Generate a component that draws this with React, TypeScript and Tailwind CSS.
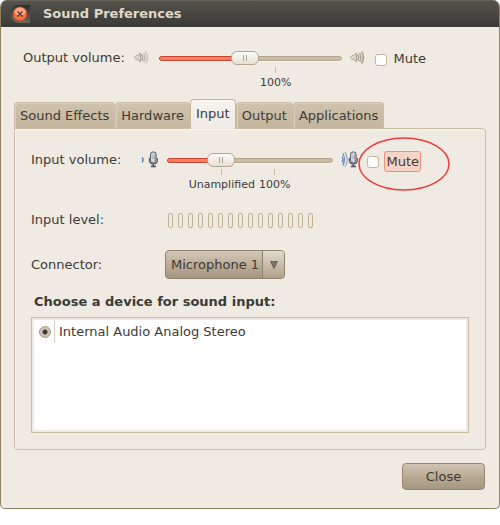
import { useState, type ReactNode } from "react";

function SpeakerIcon({ loud = false }: { loud?: boolean }) {
  const wave = loud ? "#aaa797" : "#cfcabf";
  return (
    <svg width="17" height="16" viewBox="0 0 17 16" fill="none" className="shrink-0" aria-hidden="true">
      <path d="M1 7.5 L2 6.5 H3.5 L6.5 4 V13 L3.5 10.5 H2 L1 9.5 Z" fill="#d9d5c9" stroke="#aaa698" />
      <path d="M7.6 5.5 Q9.6 8.5 7.6 11.5" stroke="#aaa698" strokeWidth="1.5" />
      <path d="M9.6 4 Q12 8.5 9.6 13" stroke={loud ? "#aaa797" : "#bdb9ac"} strokeWidth="1.5" />
      <path d="M11.6 2.6 Q15.2 8.5 11.6 14.4" stroke={wave} strokeWidth="1.8" />
    </svg>
  );
}

function MicIcon({ loud = false }: { loud?: boolean }) {
  return (
    <svg width="18" height="18" viewBox="0 0 18 18" fill="none" className="shrink-0" aria-hidden="true">
      {loud ? (
        <g stroke="#5f7fae" strokeWidth="1.1">
          <path d="M1.8 2.6 Q5.2 8.5 1.8 14.4" />
          <path d="M4 1.2 Q8.4 8.5 4 15.8" stroke="#86a0c4" />
          <path d="M1.2 5.5 Q2.9 8.5 1.2 11.5" />
        </g>
      ) : (
        <path d="M1 6.5 Q3.4 8.8 1 11.3" stroke="#4a72ad" strokeWidth="1.2" />
      )}
      <path d="M8.3 7 V9.5 Q8.5 13 12.3 13 Q16.2 13 16.3 9.5 V7" stroke="#4e5258" strokeWidth="1.1" />
      <rect x="9.4" y="0.8" width="5.8" height="11.2" rx="2.9" fill="#c3c8cf" stroke="#5c6068" />
      <path d="M11 3.5 V9.5 M12.4 2.5 V10.5" stroke="#eef1f4" strokeWidth="0.8" />
      <path d="M13.8 3.5 V10 M10.5 5 H14.5 M10.5 7 H14.5" stroke="#8d939c" strokeWidth="0.7" />
      <path d="M12.3 13 V15" stroke="#4e5258" strokeWidth="1.6" />
      <path d="M9.8 15.6 H14.9" stroke="#4e5258" strokeWidth="1.5" />
    </svg>
  );
}

function VolumeSlider({ id, initial, children }: { id: string; initial: number; children: ReactNode }) {
  const [value, setValue] = useState(initial);
  return (
    <div className="min-w-0 flex-1">
      <div className="grid h-[18px] items-center">
        <div className="col-start-1 row-start-1 h-[5px] rounded-full border border-[#b3a78f] bg-[#c9bda3] shadow-[0_1px_0_#f9f7f3]" />
        <div
          className="col-start-1 row-start-1 h-[5px] rounded-full border border-[#c8442e] bg-[#ff7b61]"
          style={{ width: `${value}%` }}
        />
        <input
          id={id}
          type="range"
          value={value}
          onChange={(e) => setValue(Number(e.target.value))}
          className="z-10 col-start-1 row-start-1 h-[18px] w-full appearance-none bg-transparent outline-none [&::-webkit-slider-thumb]:h-[14px] [&::-webkit-slider-thumb]:w-[28px] [&::-webkit-slider-thumb]:appearance-none [&::-webkit-slider-thumb]:rounded-[6px] [&::-webkit-slider-thumb]:border [&::-webkit-slider-thumb]:border-[#b0a591] [&::-webkit-slider-thumb]:bg-[linear-gradient(90deg,transparent_11px,#aea28c_11px,#aea28c_12px,transparent_12px,transparent_14px,#aea28c_14px,#aea28c_15px,transparent_15px),linear-gradient(#fdfcfa,#e6dfd3)] [&::-webkit-slider-thumb]:bg-[length:100%_6px,100%_100%] [&::-webkit-slider-thumb]:bg-[position:0_3px,0_0] [&::-webkit-slider-thumb]:bg-no-repeat"
        />
      </div>
      {children}
    </div>
  );
}

function Mark({ label }: { label: string }) {
  return (
    <div className="flex flex-col items-center gap-[3px]">
      <span className="h-[6px] w-px bg-[#c9bda3]" />
      <span className="text-[11px] leading-[14px]">{label}</span>
    </div>
  );
}

function MuteBox({ id }: { id: string }) {
  return (
    <input
      id={id}
      type="checkbox"
      className="mt-[5px] size-3 shrink-0 appearance-none rounded-[3px] border border-[#c4b89f] bg-white checked:bg-[#f07746]"
    />
  );
}

const tabs = ["Sound Effects", "Hardware", "Input", "Output", "Applications"];
const levelBars = Array.from({ length: 15 }, (_, i) => i);

export default function App() {
  const [active, setActive] = useState("Input");

  return (
    <div className="min-h-screen bg-white font-['DejaVu_Sans',sans-serif] text-[13px] leading-[18px] text-[#3c3b37]">
      <div className="overflow-hidden rounded-t-[7px] rounded-b-[5px] border border-t-0 border-[#8f8064] bg-[#efeae2]">
        <header className="flex h-[27px] items-center border-t border-[#66635a] bg-gradient-to-b from-[#54524b] to-[#3b3a36] pl-[9px]">
          <button
            type="button"
            aria-label="Close window"
            className="flex h-[18px] w-5 items-center justify-center rounded-l-[9px] bg-gradient-to-b from-[#2e2d2a] to-[#6a6963]"
          >
            <svg width="16" height="16" viewBox="0 0 16 16" aria-hidden="true">
              <circle cx="8" cy="8" r="7" fill="#f0703f" stroke="#b9502e" />
              <ellipse cx="8" cy="5.5" rx="5.4" ry="4" fill="#fbb596" opacity="0.8" />
              <path d="M5.5 5.5 L10.5 10.5 M10.5 5.5 L5.5 10.5" stroke="#5a3a2c" strokeWidth="1.4" />
            </svg>
          </button>
          <h1 className="ml-[13px] text-[13px] font-bold text-[#dfd8c8]">Sound Preferences</h1>
        </header>

        <main className="px-[13px] pt-[22px] pb-[18px]">
          <div className="flex items-start gap-2 pr-[60px] pl-[9px]">
            <label htmlFor="output-volume" className="w-[103px] shrink-0 whitespace-nowrap">
              Output volume:
            </label>
            <SpeakerIcon />
            <VolumeSlider id="output-volume" initial={46}>
              <div className="flex pl-[55%]">
                <Mark label="100%" />
              </div>
            </VolumeSlider>
            <SpeakerIcon loud />
            <div className="flex items-start gap-[6px]">
              <MuteBox id="output-mute" />
              <label htmlFor="output-mute" className="mt-px">
                Mute
              </label>
            </div>
          </div>

          <div role="tablist" className="mt-[9px] flex h-[30px] items-end">
            {tabs.map((tab) => (
              <button
                key={tab}
                type="button"
                role="tab"
                aria-selected={tab === active}
                onClick={() => setActive(tab)}
                className={
                  tab === active
                    ? "relative z-10 h-[30px] rounded-t-[4px] border border-b-0 border-[#c3b699] bg-gradient-to-b from-[#f7f4ef] to-[#efeae2] px-[5px] pb-[2px] whitespace-nowrap"
                    : "h-[27px] rounded-t-[4px] border border-b-0 border-[#c9bea8] bg-gradient-to-b from-[#cfc3ad] to-[#c3b69c] px-[5px] whitespace-nowrap shadow-[inset_1px_1px_0_#d9cfbd]"
                }
              >
                {tab}
              </button>
            ))}
          </div>

          <section
            role="tabpanel"
            aria-label={active}
            className="relative -mt-px rounded-b-[4px] rounded-tr-[4px] border border-[#c9bda3] bg-[#efeae2] px-4 pt-[22px] pb-4 shadow-[inset_1px_1px_0_#f8f5f0]"
          >
            <div className="flex items-start gap-2 pr-12">
              <label htmlFor="input-volume" className="w-[102px] shrink-0 whitespace-nowrap">
                Input volume:
              </label>
              <MicIcon />
              <VolumeSlider id="input-volume" initial={29}>
                <div className="flex gap-1 pl-[13%]">
                  <Mark label="Unamplified" />
                  <Mark label="100%" />
                </div>
              </VolumeSlider>
              <div className="relative flex items-start gap-2">
                <MicIcon loud />
                <MuteBox id="input-mute" />
                <label
                  htmlFor="input-mute"
                  className="-ml-[3px] h-[21px] rounded-[3px] border border-[#ee8f78] bg-[#f5d3c7] px-px leading-[19px]"
                >
                  Mute
                </label>
                <svg
                  width="94"
                  height="56"
                  viewBox="0 0 94 56"
                  fill="none"
                  className="pointer-events-none absolute -top-[15px] left-4"
                  aria-hidden="true"
                >
                  <ellipse cx="47" cy="28" rx="45" ry="26" stroke="#f23a3a" strokeWidth="1.5" />
                </svg>
              </div>
            </div>

            <div className="mt-[18px] flex h-5 items-center">
              <span id="level-label" className="w-[137px]">
                Input level:
              </span>
              <div role="meter" aria-labelledby="level-label" aria-valuenow={0} className="flex gap-[5px]">
                {levelBars.map((bar) => (
                  <span key={bar} className="h-[15px] w-[5px] rounded-[2px] border border-[#c0b294]" />
                ))}
              </div>
            </div>

            <div className="mt-5 flex h-[29px] items-center">
              <label htmlFor="connector" className="w-[134px]">
                Connector:
              </label>
              <div className="relative">
                <select
                  id="connector"
                  className="block h-[29px] w-[120px] appearance-none rounded-[4px] border border-[#8f816c] bg-gradient-to-b from-[#d3c8b9] via-[#bbad98] to-[#a59680] pl-[5px]"
                >
                  <option>Microphone 1</option>
                </select>
                <span className="pointer-events-none absolute top-px right-px bottom-px flex w-[22px] items-center justify-center rounded-r-[3px] border-l border-[#8f816c] bg-gradient-to-b from-[#e2dace] to-[#b0a18b]">
                  <svg width="8" height="8" viewBox="0 0 8 8" aria-hidden="true">
                    <path d="M0.5 0.5 H7.5 L4 7.5 Z" fill="#7b756a" stroke="#6b665c" />
                  </svg>
                </span>
              </div>
            </div>

            <h2 id="device-heading" className="mt-[13px] pl-[3px] font-bold leading-5">
              Choose a device for sound input:
            </h2>
            <div
              role="radiogroup"
              aria-labelledby="device-heading"
              className="mt-[5px] min-h-[116px] border border-[#cbbd9f] bg-[#efeae2] p-[2px]"
            >
              <div className="min-h-[110px] bg-white">
                <div className="flex h-[23px] items-center">
                  <div className="flex h-full w-[21px] items-center border-r border-[#d6d3cd] pl-[5px]">
                    <input
                      id="device-internal"
                      type="radio"
                      name="device"
                      defaultChecked
                      className="size-3 appearance-none rounded-full border border-[#a99d8b] bg-[#cfc3b3] checked:bg-[radial-gradient(circle,#3c3b37_0,#3c3b37_2px,#cfc3b3_3px)]"
                    />
                  </div>
                  <label htmlFor="device-internal" className="pl-1">
                    Internal Audio Analog Stereo
                  </label>
                </div>
              </div>
            </div>
          </section>

          <div className="mt-[13px] flex justify-end pr-px">
            <button
              type="button"
              className="h-[27px] w-[83px] rounded-[4px] border border-[#96876f] bg-gradient-to-b from-[#d0c4b5] via-[#b9aa94] to-[#a69780]"
            >
              Close
            </button>
          </div>
        </main>
      </div>
    </div>
  );
}
